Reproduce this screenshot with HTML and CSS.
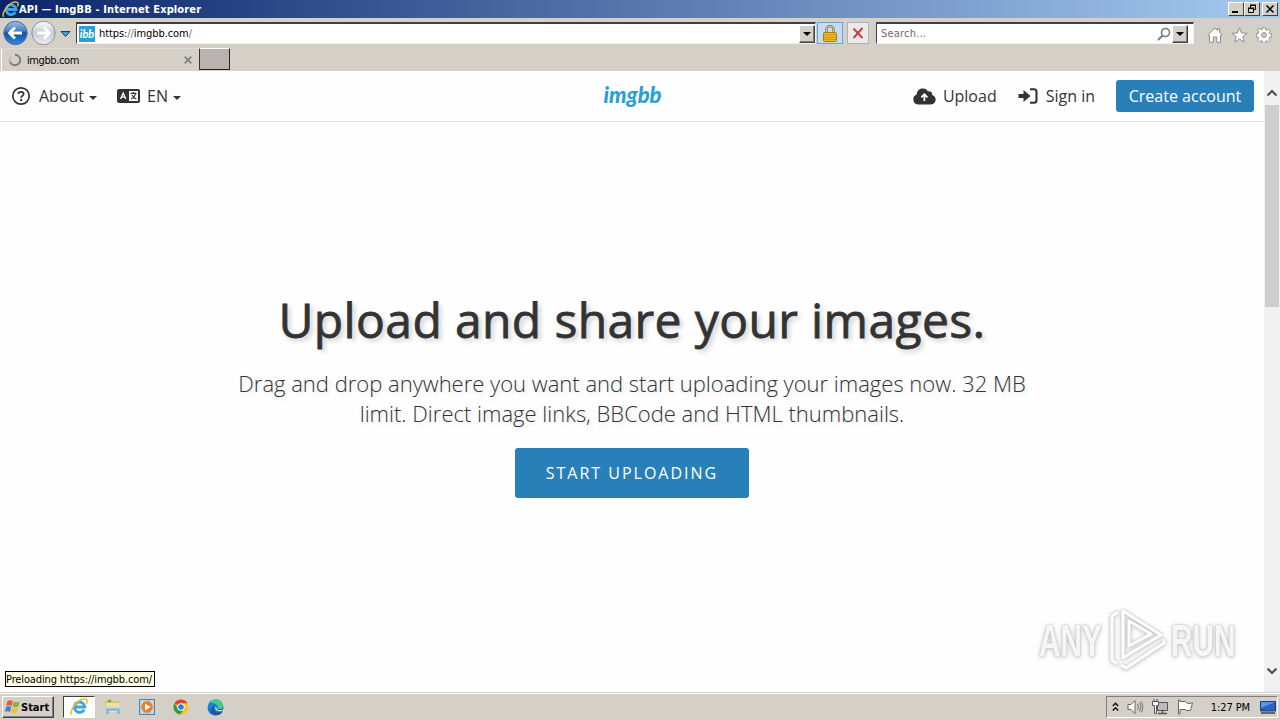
FILE: index.html
```
<!DOCTYPE html>
<html lang="en">
<head>
    <meta charset="UTF-8">
    <meta name="viewport" content="width=device-width, initial-scale=1.0">
    <title>API — ImgBB - Internet Explorer</title>
    <link rel="stylesheet" href="styles.css">
</head>
<body>
    <!-- shared icons -->
    <svg class="defs" width="0" height="0">
        <defs>
            <linearGradient id="blueBall" x1="0" y1="0" x2="0" y2="1">
                <stop offset="0" stop-color="#9dbfe8"/>
                <stop offset=".4" stop-color="#4a80c8"/>
                <stop offset=".5" stop-color="#1450a8"/>
                <stop offset="1" stop-color="#2f8be0"/>
            </linearGradient>
            <linearGradient id="greyBall" x1="0" y1="0" x2="0" y2="1">
                <stop offset="0" stop-color="#ffffff"/>
                <stop offset=".5" stop-color="#c3c9d2"/>
                <stop offset="1" stop-color="#eef1f5"/>
            </linearGradient>
            <linearGradient id="edge" x1="0" y1="0" x2="1" y2="1">
                <stop offset="0" stop-color="#1b9de2"/>
                <stop offset="1" stop-color="#0c4fa0"/>
            </linearGradient>
            <symbol id="ie" viewBox="0 0 16 16">
                <path d="M12.600 10.300a4.600 4.600 0 1 1 .5-2.300H4.200" fill="none" stroke="#3ba6e6" stroke-width="2.600"/>
                <path d="M1.600 14.800C-.6 12.500 4 4.500 9 2c3-1.500 6-1.500 6.200.5.1 1-.3 1.900-.7 2.600" fill="none" stroke="#e9bd2c" stroke-width="1.400"/>
            </symbol>
        </defs>
    </svg>

    <div class="titlebar">
        <svg class="title-icon" width="17" height="17"><use href="#ie"/></svg>
        <span class="title-text">API — ImgBB - Internet Explorer</span>
        <div class="window-buttons">
            <span class="win-btn"><svg width="14" height="12"><path d="M3 9h6" stroke="#000" stroke-width="2"/></svg></span>
            <span class="win-btn"><svg width="14" height="12"><path d="M5.500 5V2.500h5v4H9M5 2h6M3.500 5.500h5v4h-5zM3 5h6" fill="none" stroke="#000"/></svg></span>
            <span class="win-btn close"><svg width="14" height="12"><path d="M3.500 2.500l7 7M10.500 2.500l-7 7" stroke="#000" stroke-width="1.500"/></svg></span>
        </div>
    </div>

    <div class="addressbar">
        <svg class="nav-buttons" width="73" height="29" viewBox="0 0 73 29">
            <circle cx="15.500" cy="15" r="11.700" fill="url(#blueBall)" stroke="#52709c"/>
            <path d="M22 15H10M15 9.500L9.500 15l5.500 5.500" fill="none" stroke="#fff" stroke-width="2.800"/>
            <circle cx="43.500" cy="15" r="11.700" fill="url(#greyBall)" stroke="#8b929c"/>
            <path d="M37 15h12M44 9.500l5.500 5.500-5.500 5.500" fill="none" stroke="#fff" stroke-width="2.800"/>
            <path d="M61 13.500h9l-4.500 5z" fill="#4d9fc8" stroke="#1d4567"/>
        </svg>
        <div class="field url-field">
            <span class="favicon">ibb</span>
            <span class="url">https:<i>//</i>imgbb.com<i>/</i></span>
            <span class="drop"></span>
        </div>
        <div class="tool-btn lock">
            <svg width="14" height="17" viewBox="0 0 14 17">
                <path d="M3.500 8V4.500a3.500 3.500 0 0 1 7 0V8" fill="none" stroke="#8b7a45" stroke-width="2.400"/>
                <path d="M3.500 8V4.500a3.500 3.500 0 0 1 7 0V8" fill="none" stroke="#e3d9a8" stroke-width=".8"/>
                <rect x=".5" y="7.500" width="13" height="9" rx="1" fill="#edb91d" stroke="#a67c10"/>
                <path d="M1 10h12M1 12.500h12M1 14.500h12" stroke="#c48f10" stroke-width=".8"/>
            </svg>
        </div>
        <div class="tool-btn stop">
            <svg width="12" height="12" viewBox="0 0 12 12"><path d="M1.500 1.500l9 9.500M10.500 1L1.500 11" stroke="#c23f46" stroke-width="1.900"/></svg>
        </div>
        <div class="field search-field">
            <span class="search-text">Search...</span>
            <svg width="14" height="14" viewBox="0 0 14 14"><circle cx="8.500" cy="5.500" r="4" fill="none" stroke="#777b83" stroke-width="1.600"/><path d="M5.500 8.500L1 13" stroke="#777b83" stroke-width="2"/></svg>
            <span class="drop"></span>
        </div>
        <div class="ie-tools">
            <svg width="16" height="16" viewBox="0 0 16 16"><path d="M.8 8L8 1l2.500 2.300V1.500h2v3.800L15.200 8l-1 1-.7-.5V15.300H9.800V10H6.300v5.300H2.500V8.500l-.7.500z" fill="#fff" stroke="#8d8d8d"/></svg>
            <svg width="17" height="16" viewBox="0 0 17 16"><path d="M8.500.8l2 5.200 5.600.2-4.400 3.500 1.500 5.400-4.700-3.100-4.700 3.100 1.500-5.400L.9 6.200 6.500 6z" fill="#fff" stroke="#8d8d8d"/></svg>
            <svg width="16" height="16" viewBox="0 0 16 16">
                <path d="M6.700.7h2.600l.4 2 1.200.5 1.700-1.100 1.800 1.800-1.100 1.700.5 1.200 1.900.4v2.600l-2 .4-.5 1.200 1.200 1.700-1.800 1.800-1.700-1.100-1.200.5-.4 1.900H6.700l-.4-2-1.200-.5-1.700 1.200-1.800-1.800 1.100-1.700-.5-1.200-1.900-.4V6.700l2-.4.5-1.200-1.200-1.700 1.800-1.800 1.700 1.100 1.200-.5z" fill="#fff" stroke="#8d8d8d"/>
                <circle cx="8" cy="8" r="2.400" fill="#d4d0c8" stroke="#8d8d8d"/>
            </svg>
        </div>
    </div>

    <div class="tabs">
        <div class="tab">
            <svg width="14" height="14" viewBox="0 0 14 14"><path d="M7 1.800A5.200 5.200 0 1 1 2 8.500" fill="none" stroke="#7d7d7d" stroke-width="2"/><path d="M2 8.500a5.200 5.200 0 0 1 1-4.800" fill="none" stroke="#bbb" stroke-width="2"/></svg>
            <span class="tab-title">imgbb.com</span>
            <svg width="8" height="8" viewBox="0 0 8 8"><path d="M.7.7l6.600 6.600M7.300.7L.7 7.300" stroke="#808080" stroke-width="1.700"/></svg>
        </div>
        <div class="new-tab"></div>
    </div>

    <div class="viewport">
        <div class="page">
            <div class="top-bar">
                <div class="menu menu-left">
                    <a class="menu-item about">
                        <svg width="20" height="20" viewBox="0 0 20 20"><circle cx="10" cy="10" r="8.200" fill="none" stroke="#333" stroke-width="1.700"/><path d="M7.300 8C7.400 5.200 12.600 5.200 12.600 8c0 1.800-2.500 1.900-2.500 3.700" fill="none" stroke="#333" stroke-width="1.800"/><circle cx="10.100" cy="14" r="1.150" fill="#333"/></svg>
                        <span>About</span><b class="caret"></b>
                    </a>
                    <a class="menu-item lang">
                        <svg width="23" height="14" viewBox="0 0 23 14">
                            <rect width="23" height="14" rx="2" fill="#333"/>
                            <rect x="12" y="2" width="9" height="10" fill="#fff"/>
                            <path d="M3.500 10L6.200 4l2.700 6M4.500 8.200h3.400" fill="none" stroke="#fff" stroke-width="1.300"/>
                            <path d="M13.500 4.300h6M16.500 3v1.300M18.500 4.500c-.5 2.500-2 4.500-4.500 5.500M15 6c.7 2 2.200 3.300 4.500 4" fill="none" stroke="#333" stroke-width="1.200"/>
                        </svg>
                        <span>EN</span><b class="caret"></b>
                    </a>
                </div>
                <div class="logo">imgbb</div>
                <div class="menu menu-right">
                    <a class="menu-item upload">
                        <svg width="23" height="17" viewBox="0 0 23 17"><path d="M5.500 16.500A5.200 5.200 0 0 1 3.800 6.400C3.600 2.500 7.200.3 10.400.6c2 .1 3.700 1.200 4.500 2.700 2.700-.7 4.800 1.200 4.200 3.700 5.200 1.400 4.600 9.300-1.400 9.500z" fill="#333"/><path d="M11.400 13V6.800M8.400 9.300l3-3 3 3" fill="none" stroke="#fff" stroke-width="1.800"/></svg>
                        <span>Upload</span>
                    </a>
                    <a class="menu-item signin">
                        <svg width="20" height="16" viewBox="0 0 20 16"><path d="M.5 6h5V2l7 6-7 6v-4h-5z" fill="#333"/><path d="M12 1.200h4a2.500 2.500 0 0 1 2.500 2.500v8.600a2.500 2.500 0 0 1-2.500 2.500h-4" fill="none" stroke="#333" stroke-width="2.100"/></svg>
                        <span>Sign in</span>
                    </a>
                    <a class="btn create">Create account</a>
                </div>
            </div>

            <div class="home-cover">
                <h1>Upload and share your images.</h1>
                <p>Drag and drop anywhere you want and start uploading your images now. 32 MB<br>limit. Direct image links, BBCode and HTML thumbnails.</p>
                <a class="btn start-uploading">START UPLOADING</a>
            </div>

            <div class="status-tip">Preloading https://imgbb.com/</div>

            <div class="watermark">
                <span class="mark-text">ANY</span>
                <svg width="60" height="66" viewBox="0 0 60 66">
                    <path d="M10 4L4 8v44l5 4M15 3v47l6-4 32-19zM21 13v25l22-12zM56 31v4L18 60l-5-3" fill="none" stroke="#fff" stroke-width="3" stroke-linejoin="round"/>
                </svg>
                <span class="mark-text">RUN</span>
            </div>
        </div>
        <div class="scrollbar">
            <svg width="16" height="34" viewBox="0 0 16 34"><path d="M3.500 24.500L8 20l4.500 4.500" fill="none" stroke="#505050" stroke-width="2.200"/></svg>
            <div class="thumb"></div>
            <svg class="down" width="16" height="34" viewBox="0 0 16 34"><path d="M3.500 10.500L8 15l4.500-4.500" fill="none" stroke="#505050" stroke-width="2.200"/></svg>
        </div>
    </div>

    <div class="taskbar">
        <div class="start">
            <svg width="16" height="16" viewBox="0 0 16 16"><path d="M2.500 2C4.500.8 6 1 7.800 2L6.600 7C5 6 3 6 1.200 7z" fill="#e5592b"/><path d="M8.800 2.500c2 1 3.700 1 6 0l-1.400 5c-2 1-4 1-5.800 0z" fill="#7db843"/><path d="M1 8c2-1 3.500-1 5.300 0L5 13c-1.700-1-3.300-1-5 0z" fill="#3c84d0"/><path d="M7.300 8.500c2 1 3.800 1 5.800 0l-1.300 5c-2 1-4 1-5.800 0z" fill="#f3c02c"/></svg>
            <span>Start</span>
        </div>
        <div class="task active"><svg width="18" height="18"><use href="#ie"/></svg></div>
        <div class="task">
            <svg width="18" height="18" viewBox="0 0 18 18"><path d="M1 3.500l5-2 2 1.500h7v9H2z" fill="#dfc05c"/><path d="M2 5h13.500v9H2z" fill="#f3e09a"/><path d="M4 2h3v2H4z" fill="#61ae58"/><path d="M3.500 16v-4.500h11V16" fill="none" stroke="#79b8dc" stroke-width="2.500"/><path d="M2 9.500h14" stroke="#b9dce8" stroke-width="1.500"/></svg>
        </div>
        <div class="task">
            <svg width="16" height="16" viewBox="0 0 16 16"><rect x=".5" y=".5" width="15" height="15" fill="#a9d0ec" stroke="#4e86b4"/><path d="M3 1v14M13 1v14" stroke="#dcedf8"/><circle cx="8" cy="8" r="5.800" fill="#f17d1c"/><path d="M6 4.500l5.500 3.500L6 11.500z" fill="#fff"/></svg>
        </div>
        <div class="task">
            <svg width="16" height="16" viewBox="0 0 16 16"><circle cx="8" cy="8" r="7.500" fill="#f8c51c"/><path d="M8 8L1.500 4.200A7.500 7.500 0 0 1 14.500 4.200H8z" fill="#df3f32"/><path d="M1.500 4.200A7.500 7.500 0 0 0 7.500 15.500L10.500 10 8 8 4.800 9.500z" fill="#2d9d4b"/><circle cx="8" cy="8" r="3.700" fill="#fff"/><circle cx="8" cy="8" r="2.800" fill="#347bdd"/></svg>
        </div>
        <div class="task">
            <svg width="17" height="17" viewBox="0 0 17 17"><circle cx="8.500" cy="8.500" r="8" fill="url(#edge)"/><path d="M3 3C7-1.500 14.500 0 16 5.500c.8 3-1.500 5-5 4.500-1.500-.5.300-1.500-.5-3C9 4 5 4 3 3z" fill="#42c98c"/><path d="M8 7c-3 2-1.500 6 2 6.800 2 .5 4 0 5.500-1-3 4.500-9 4-11 .2C3 10 5.500 7.500 8 7z" fill="#145aac"/><path d="M8.300 7.800c2 .3 1 1.500 1.600 2.200 1 1.500 4 1.400 6.400.2l-.4 1.600c-4.500 2-9-.5-7.600-4z" fill="#d4d0c8"/></svg>
        </div>
        <div class="tray">
            <svg width="7" height="10" viewBox="0 0 7 10"><path d="M.8 4l2.700-2.700L6.200 4M.8 8.500l2.700-2.700 2.700 2.700" fill="none" stroke="#111" stroke-width="1.500"/></svg>
            <svg width="17" height="16" viewBox="0 0 17 16"><path d="M1 5.500h3l4-4v13l-4-4H1z" fill="#fff" stroke="#666"/><path d="M10.500 5q2 3 0 6M12.500 3.500q3 4.500 0 9M14.500 2.500q3 5.500 0 11" fill="none" stroke="#777"/></svg>
            <svg width="17" height="16" viewBox="0 0 17 16"><path d="M5.500 3.500h10v8h-10z" fill="#bbb" stroke="#555"/><path d="M10.500 12v2M6 14.500h9" stroke="#555" stroke-width="1.500"/><path d="M.5 2.500h6v4h-2v8h-2v-8h-2zM2 0v3M5 0v3" fill="#fff" stroke="#555"/></svg>
            <svg width="17" height="16" viewBox="0 0 17 16"><path d="M1.500 1v14h1.500V10.500h5l1.500 1h4L15.500 4l-5 .5L8.500 2.500H3V1z" fill="#fff" stroke="#666"/></svg>
            <span class="clock">1:27 PM</span>
            <svg class="desktop" width="16" height="13" viewBox="0 0 16 13"><path d="M.5.5h15v9.500H.5z" fill="#2463c4" stroke="#153e80"/><path d="M1 1h14L1 7z" fill="#5b96df"/><path d="M1 12h14" stroke="#444" stroke-width="1.500"/></svg>
        </div>
    </div>
</body>
</html>
```
FILE: styles.css
```
* {
    box-sizing: border-box;
}

body {
    margin: 0;
    width: 1280px;
    height: 720px;
    overflow: hidden;
    display: flex;
    flex-direction: column;
    background: #d4d0c8;
    font-family: "DejaVu Sans Condensed", "DejaVu Sans", sans-serif;
    font-stretch: condensed;
    font-size: 11px;
    color: #000;
}

svg {
    flex: none;
    display: block;
}

.defs {
    position: absolute;
}

/* window title */
.titlebar {
    height: 18px;
    flex: none;
    display: flex;
    align-items: center;
    padding: 0 2px;
    background: linear-gradient(to right, #0a246a, #a6caf0);
    color: #fff;
    font-weight: bold;
}

.title-text {
    letter-spacing: .12px;
    white-space: nowrap;
}

.window-buttons {
    display: flex;
    margin-left: auto;
}

.win-btn {
    width: 16px;
    height: 14px;
    background: #d4d0c8;
    border: 1px solid;
    border-color: #fff #404040 #404040 #fff;
}

.win-btn.close {
    margin-left: 2px;
}

/* address bar */
.addressbar {
    height: 30px;
    flex: none;
    display: flex;
    align-items: flex-start;
}

.nav-buttons {
    margin-right: 3px;
}

.field {
    height: 22px;
    margin-top: 4px;
    display: flex;
    align-items: center;
    background: #fff;
    border: 1px solid;
    border-color: #404040 #f4f2ee #f4f2ee #404040;
    border-top-width: 2px;
}

.url-field {
    width: 740px;
}

.favicon {
    width: 16px;
    height: 16px;
    margin: 0 4px 0 2px;
    background: #2a9fd6;
    color: #fff;
    font: italic bold 11px/15px "Lato", sans-serif;
    text-align: center;
}

.url {
    letter-spacing: -.08px;
}

.url i {
    color: #777;
    font-style: normal;
}

.drop {
    width: 16px;
    height: 18px;
    margin-left: auto;
    display: flex;
    align-items: center;
    justify-content: center;
    background: #d4d0c8;
    border: 1px solid;
    border-color: #fff #404040 #404040 #fff;
    box-shadow: inset -1px -1px #808080;
}

.drop::after {
    content: "";
    border: 4px solid transparent;
    border-top-color: #000;
    border-bottom: 0;
}

.tool-btn {
    height: 22px;
    margin-top: 4px;
    display: flex;
    align-items: center;
    justify-content: center;
}

.lock {
    width: 26px;
    margin-left: 1px;
    background: #c4dcf5;
    border: 1px solid #6ba2dc;
}

.stop {
    width: 22px;
    margin: 4px 7px 0 4px;
    background: #ece9ea;
    border: 1px solid #b5b0b0;
}

.search-field {
    width: 318px;
    padding-left: 4px;
}

.search-text {
    color: #6d6d6d;
    letter-spacing: .2px;
}

.search-field svg {
    margin-left: auto;
}

.search-field .drop {
    margin: 0 5px 0 1px;
}

.ie-tools {
    display: flex;
    gap: 8px;
    margin: 9px 0 0 13px;
}

/* tabs */
.tabs {
    height: 23px;
    flex: none;
    display: flex;
}

.tab {
    width: 198px;
    height: 23px;
    margin-left: 1px;
    padding: 0 7px 0 6px;
    display: flex;
    align-items: center;
    border-left: 1px solid #fff;
    border-top: 1px solid #dedbd5;
}

.tab-title {
    margin: 0 auto 0 5px;
    letter-spacing: -.4px;
}

.new-tab {
    width: 31px;
    height: 22px;
    background: #bab2ae;
    border: 1px solid;
    border-color: #fff #222 #222 #333;
}

/* page */
.viewport {
    height: 621px;
    flex: none;
    display: flex;
    background: #fff;
}

.page {
    position: relative;
    width: 1264px;
    background: #fefefe;
    color: #333;
    font-family: "Open Sans", sans-serif;
    font-stretch: normal;
}

.top-bar {
    height: 51px;
    display: flex;
    justify-content: space-between;
    align-items: center;
    padding: 0 10px 0 11px;
    border-bottom: 1px solid #dfdfdf;
    font-size: 16px;
}

.menu {
    flex: 1;
    display: flex;
    align-items: center;
}

.menu-right {
    justify-content: flex-end;
}

.menu-item {
    display: flex;
    align-items: center;
    white-space: nowrap;
}

.menu-item svg {
    margin-right: 7px;
}

.about {
    margin-right: 20px;
}

.about svg {
    margin-right: 8px;
}

.upload {
    margin-right: 21px;
}

.signin {
    margin-right: 21px;
}

.signin svg {
    margin-right: 8px;
}

.caret {
    margin: 4px 0 0 5px;
    border: 4px solid transparent;
    border-top-color: #333;
    border-bottom: 0;
}

.logo {
    width: 64px;
    margin-bottom: 3px;
    text-align: center;
    color: #2a9fd6;
    font: italic 900 22px/28px "Lato", sans-serif;
}

.btn {
    background: #2980b9;
    color: #fff;
    border-radius: 3px;
    text-align: center;
}

.create {
    width: 138px;
    height: 32px;
    line-height: 32px;
}

.home-cover {
    padding-top: 165px;
    display: flex;
    flex-direction: column;
    align-items: center;
    text-align: center;
}

.home-cover h1 {
    margin: 0;
    font-size: 48px;
    font-weight: 500;
    line-height: 66px;
    letter-spacing: .38px;
    -webkit-text-stroke: .8px #333;
    text-shadow: 3px 3px 5px rgba(0, 0, 0, .2);
    white-space: nowrap;
}

.home-cover p {
    margin: 15px 0 20px;
    font-size: 22px;
    font-weight: 300;
    line-height: 30px;
    text-shadow: 2px 2px 4px rgba(0, 0, 0, .12);
    white-space: nowrap;
}

.start-uploading {
    width: 234px;
    height: 50px;
    font-size: 16px;
    line-height: 50px;
    letter-spacing: 2px;
}

.status-tip {
    position: absolute;
    left: 5px;
    bottom: 5px;
    width: 150px;
    height: 16px;
    background: #ffffe1;
    border: 1px solid #000;
    color: #000;
    font: 11px/15px "DejaVu Sans Condensed", sans-serif;
    letter-spacing: -.13px;
    white-space: nowrap;
}

.watermark {
    position: absolute;
    left: 1039px;
    top: 537px;
    width: 198px;
    display: flex;
    align-items: center;
    justify-content: space-between;
    filter: drop-shadow(0 0 1px #bbb) drop-shadow(0 1px 2px #ccc);
}

.mark-text {
    width: 66px;
    color: #f6f6f6;
    font: bold 45px/60px "Liberation Sans", sans-serif;
    transform: scaleX(.66);
    transform-origin: left;
}

.scrollbar {
    width: 16px;
    display: flex;
    flex-direction: column;
    background: #f0f0f0;
}

.thumb {
    height: 202px;
    margin: 0 1px;
    background: #cdcdcd;
}

.down {
    margin-top: auto;
}

/* taskbar */
.taskbar {
    height: 28px;
    flex: none;
    display: flex;
    align-items: center;
    padding: 1px 2px 0 2px;
    border-top: 1px solid #d4d0c8;
    box-shadow: inset 0 1px #fff;
}

.start {
    width: 52px;
    height: 22px;
    margin-right: 9px;
    padding-left: 2px;
    display: flex;
    align-items: center;
    border: 1px solid;
    border-color: #fff #404040 #404040 #fff;
    box-shadow: inset -1px -1px #808080;
    font-weight: bold;
}

.task {
    width: 32px;
    height: 22px;
    margin-right: 2px;
    display: flex;
    align-items: center;
    justify-content: center;
}

.task.active {
    background: #fff;
    border: 1px solid;
    border-color: #404040 #fff #fff #404040;
}

.tray {
    width: 172px;
    height: 22px;
    margin-left: auto;
    padding: 0 1px 0 5px;
    display: flex;
    align-items: center;
    gap: 8px;
    border: 1px solid;
    border-color: #808080 #fff #fff #808080;
}

.clock {
    margin-left: auto;
    letter-spacing: -.1px;
    white-space: nowrap;
}

.desktop {
    margin-left: 2px;
}
```
